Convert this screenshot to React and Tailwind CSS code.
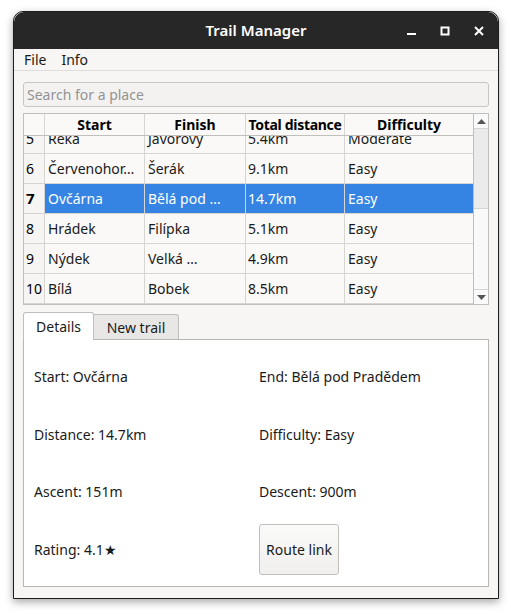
import React from 'react';

const rows = [
  { n: 5, start: 'Řeka', finish: 'Javorový', dist: '5.4km', diff: 'Moderate' },
  { n: 6, start: 'Červenohor…', finish: 'Šerák', dist: '9.1km', diff: 'Easy' },
  { n: 7, start: 'Ovčárna', finish: 'Bělá pod …', dist: '14.7km', diff: 'Easy', selected: true },
  { n: 8, start: 'Hrádek', finish: 'Filípka', dist: '5.1km', diff: 'Easy' },
  { n: 9, start: 'Nýdek', finish: 'Velká …', dist: '4.9km', diff: 'Easy' },
  { n: 10, start: 'Bílá', finish: 'Bobek', dist: '8.5km', diff: 'Easy' },
];

function TitleBar() {
  return (
    <div className="relative h-[37px] bg-[#272727] rounded-t-[10px] flex items-center justify-center">
      <span className="text-white text-[15px] font-semibold">Trail Manager</span>
      <div className="absolute right-0 top-0 h-full flex items-center">
        <svg width="34" height="20" viewBox="0 0 34 20">
          <rect x="13" y="12" width="9" height="2" fill="#fff" />
        </svg>
        <svg width="34" height="20" viewBox="0 0 34 20">
          <rect x="13.5" y="6.5" width="7" height="7" fill="none" stroke="#fff" strokeWidth="2" />
        </svg>
        <svg width="34" height="20" viewBox="0 0 34 20" className="mr-[2px]">
          <path d="M13 6 L21 14 M21 6 L13 14" stroke="#fff" strokeWidth="2" />
        </svg>
      </div>
    </div>
  );
}

function Table() {
  return (
    <div className="mx-[9px] mt-[6px] h-[192px] border border-[#c0bfbc] flex bg-[#faf9f8]">
      <div className="flex-1 flex flex-col overflow-hidden">
        <div className="h-[22px] flex border-b border-[#c0bfbc] bg-[#faf9f8] font-bold text-[14px] leading-[22px] text-black shrink-0">
          <div className="w-[21px] border-r border-[#d6d5d2]" />
          <div className="w-[100px] text-center border-r border-[#d6d5d2]">Start</div>
          <div className="w-[101px] text-center border-r border-[#d6d5d2]">Finish</div>
          <div className="w-[99px] text-center border-r border-[#d6d5d2] whitespace-nowrap overflow-hidden tracking-[-0.3px]">Total distance</div>
          <div className="flex-1 text-center">Difficulty</div>
        </div>
        <div className="flex-1 overflow-hidden">
          <div className="-mt-[12px]">
            {rows.map((r) => (
              <div key={r.n} className="h-[30px] flex text-[14px] leading-[29px] border-b border-[#d6d5d2]">
                <div className={`w-[21px] bg-[#f6f5f4] border-r border-[#d6d5d2] pl-[2px] text-black ${r.selected ? 'font-bold text-[15px]' : ''}`}>
                  {r.n}
                </div>
                <div className={`flex flex-1 ${r.selected ? 'bg-[#3584e4] text-white' : 'text-[#1a1a1a]'}`}>
                  <div className="w-[100px] px-[3px] border-r border-[#d6d5d2] whitespace-nowrap overflow-hidden">{r.start}</div>
                  <div className="w-[101px] px-[3px] border-r border-[#d6d5d2] whitespace-nowrap overflow-hidden">{r.finish}</div>
                  <div className="w-[99px] px-[2px] border-r border-[#d6d5d2] whitespace-nowrap">{r.dist}</div>
                  <div className="flex-1 px-[3px]">{r.diff}</div>
                </div>
              </div>
            ))}
          </div>
        </div>
      </div>
      <div className="w-[15px] border-l border-[#c0bfbc] flex flex-col bg-[#f4f3f2]">
        <div className="h-[15px] bg-[#fafafa] border-b border-[#d6d5d2] flex items-center justify-center">
          <svg width="9" height="5" viewBox="0 0 9 5"><path d="M4.5 0 L9 5 L0 5 Z" fill="#555" /></svg>
        </div>
        <div className="h-[80px] bg-[#ebebeb] border-b border-[#d6d5d2]" />
        <div className="flex-1 bg-[#f9f9f9]" />
        <div className="h-[15px] bg-[#fafafa] border-t border-[#d6d5d2] flex items-center justify-center">
          <svg width="9" height="5" viewBox="0 0 9 5"><path d="M0 0 L9 0 L4.5 5 Z" fill="#555" /></svg>
        </div>
      </div>
    </div>
  );
}

function Details() {
  return (
    <div className="mx-[9px] mt-[6px]">
      <div className="flex items-end h-[28px]">
        <div className="h-[28px] w-[71px] bg-white border border-[#c0bfbc] border-b-0 rounded-t-[3px] flex items-center justify-center text-[14px] text-[#1a1a1a] relative top-[1px]">
          Details
        </div>
        <div className="h-[25px] w-[85px] bg-[#e8e7e6] border border-[#c0bfbc] border-b-0 border-l-0 rounded-tr-[3px] flex items-center justify-center text-[14px] text-[#1a1a1a]">
          New trail
        </div>
      </div>
      <div className="h-[248px] bg-white border border-[#b7b6b3] px-[10px] py-[8px] grid grid-cols-[225px_1fr] grid-rows-4 text-[14px] text-[#1a1a1a]">
        <div className="flex items-center">Start: Ovčárna</div>
        <div className="flex items-center">End: Bělá pod Pradědem</div>
        <div className="flex items-center">Distance: 14.7km</div>
        <div className="flex items-center">Difficulty: Easy</div>
        <div className="flex items-center">Ascent: 151m</div>
        <div className="flex items-center">Descent: 900m</div>
        <div className="flex items-center">Rating: 4.1★</div>
        <div className="flex items-center">
          <button className="w-[80px] h-[51px] rounded-[3px] border border-[#c0bfbc] bg-gradient-to-b from-[#fafaf9] to-[#f0efee] text-[14px] text-[#1a1a1a]">
            Route link
          </button>
        </div>
      </div>
    </div>
  );
}

export default function App() {
  return (
    <div className="w-[511px] h-[615px] bg-white pt-[11px] pl-[13px]" style={{ fontFamily: '"Noto Sans", "Open Sans", sans-serif' }}>
      <div className="w-[486px] h-[588px] rounded-t-[10px] border border-[#1c1c1c] bg-[#f7f6f5] shadow-[0_3px_8px_rgba(0,0,0,0.35)] flex flex-col">
        <TitleBar />
        <div className="h-[22px] flex items-center gap-[15px] px-[10px] text-[14px] text-[#1a1a1a] border-b border-[#dedddb]">
          <span>File</span>
          <span>Info</span>
        </div>
        <div className="mx-[9px] mt-[11px] h-[25px] rounded-[3px] border border-[#c7c6c3] bg-[#f3f2f1] flex items-center px-[3px] text-[14px] text-[#929292]">
          Search for a place
        </div>
        <Table />
        <Details />
      </div>
    </div>
  );
}
